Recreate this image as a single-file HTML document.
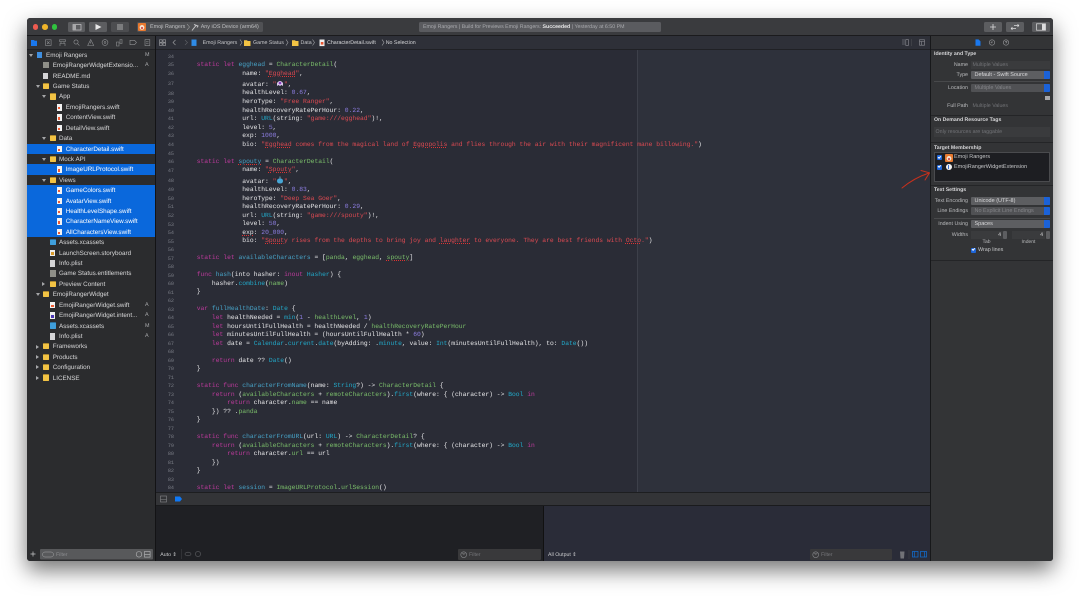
<!DOCTYPE html>
<html><head><meta charset="utf-8"><title>Xcode</title>
<style>
html,body{margin:0;padding:0;width:1080px;height:596px;overflow:hidden;background:#fff}
body{font-family:"Liberation Sans",sans-serif;text-rendering:geometricPrecision;filter:blur(.28px)}
div,span,i,b,u,svg{position:absolute}
#win{left:27px;top:18px;width:1026px;height:543px;background:#2a2c36;box-shadow:0 9px 22px rgba(0,0,0,.55);border-radius:3px;overflow:hidden}
#root{left:-27px;top:-18px;width:1080px;height:596px}
.tl{width:5.6px;height:5.6px;border-radius:50%;top:24.2px}
.btn{background:#5c5d60;border-radius:1.5px;top:22px;height:10px}
.tt{font-size:5.4px;line-height:9.5px;height:8px;white-space:nowrap;color:#b8b9bb}
/* sidebar */
.r{left:27px;width:128px;height:10.4px;font-size:6.3px;line-height:11.8px;color:#d6d6d7;white-space:nowrap}
.r span{position:absolute}
.sel{background:#0a68dc;color:#fff}
.r .a{width:0;height:0;top:3.9px;border-top:3.6px solid #a5a6a8;border-left:2.2px solid transparent;border-right:2.2px solid transparent}
.r .c{width:0;height:0;top:3.4px;border-left:3.6px solid #a5a6a8;border-top:2.2px solid transparent;border-bottom:2.2px solid transparent}
.L0 .a{left:2px}.L0 i{left:9px}.L0 span{left:19px}
.L1 .a,.L1 .c{left:8.8px}.L1 i{left:15.8px}.L1 span{left:25.7px}
.L2 .a,.L2 .c{left:15px}.L2 i{left:22.5px}.L2 span{left:32px}
.L3 i{left:29px}.L3 span{left:38.7px}
.r i{top:2.1px}
.fo{width:6.4px;height:5.2px;background:#f2c344;border-radius:.6px;margin-top:.9px;box-shadow:0 -.8px 0 #d9a82f}
.fb{width:6.4px;height:5.2px;background:#3f9fdc;border-radius:.6px;margin-top:.9px;box-shadow:0 -.8px 0 #2f86c0}
.sw{width:5px;height:6.6px;background:#f2f2f2;margin-left:.6px}
.sw:after{content:"";position:absolute;left:1.4px;top:3px;width:2.2px;height:2.2px;background:#ef5a32}
.pl{width:5px;height:6.6px;background:#d4d4d6;margin-left:.6px}
.en{width:6.4px;height:6.2px;background:#8f8f88}
.ap{width:5.4px;height:6.6px;background:#3f8fe0;margin-left:.5px}
.ia{width:5px;height:6.6px;background:#eee;margin-left:.6px}
.ia:after{content:"";position:absolute;left:1px;top:2.4px;width:3px;height:3px;background:#4a35b5}
.sb{width:5px;height:6.6px;background:#eee;margin-left:.6px}
.sb:after{content:"";position:absolute;left:1.2px;top:2px;width:2.6px;height:3.4px;background:#d89a2a}
.r u{position:absolute;left:118px;text-decoration:none;font-size:5.4px;color:#a9aaac}
/* code */
#code{left:196.7px;top:.5px;font-family:"Liberation Mono",monospace;font-size:6.33px;color:#e6e6e8;width:0;height:0}
.l{left:0;height:8px;line-height:8px;white-space:pre}
.n{left:-42.7px;width:20px;text-align:right;font-size:5.1px;color:#7a7d86;top:.3px}
.k{position:static;color:#bd3a9c}.d{position:static;color:#47a2c6}.g{position:static;color:#7abd6a}.s{position:static;color:#dc4a52}.m{position:static;color:#8c7de0}.y{position:static;color:#22a8c8}.e{position:static;text-decoration:underline dotted #d33;text-decoration-thickness:.5px;text-underline-offset:.7px}
.em{position:relative;display:inline-block;width:7.6px;height:6px}
/* inspector */
.h{left:934px;font-size:5.2px;font-weight:bold;color:#d6d6d8;white-space:nowrap;height:8px;line-height:9.4px}
.lb{width:68px;left:900px;text-align:right;font-size:5.3px;color:#b9babc;height:8px;line-height:9.6px;white-space:nowrap}
.f{background:#3d3e40;left:971px;width:79px;height:8px;font-size:5.3px;line-height:9.4px;color:#717276;text-indent:1.5px;white-space:nowrap}
.p{background:#5d5e61;left:971px;width:79px;height:8px;border-radius:1px;font-size:5.5px;line-height:9.2px;color:#d8d8da;text-indent:3.5px;white-space:nowrap;overflow:hidden}
.p:after{content:"";position:absolute;right:0;top:0;width:6px;height:8px;background:#1b62d8}
.dim{color:#85868a;background:#505154}
.sp{left:934px;width:116px;height:.6px;background:#48494b}
.spb{left:931px;width:122px;height:.7px;background:#242527}
.ck{width:5px;height:5px;background:#1f66d9;border-radius:1px}
.ck:after{content:"";position:absolute;left:1.3px;top:.7px;width:2.2px;height:1.3px;border-left:.6px solid #fff;border-bottom:.6px solid #fff;transform:rotate(-45deg)}
</style></head><body>
<div id="win"><div id="root">

<!-- toolbar -->
<div style="left:27px;top:18px;width:1026px;height:17.5px;background:#3a3b3e"></div>
<div style="left:27px;top:35px;width:1026px;height:.8px;background:#1b1b1d"></div>
<div class="tl" style="left:32.5px;background:#ee5b50"></div>
<div class="tl" style="left:42.2px;background:#f0b429"></div>
<div class="tl" style="left:51.9px;background:#30c33f"></div>
<div class="btn" style="left:68px;width:17px"></div>
<svg style="left:68px;top:22px" width="17" height="10"><rect x="5" y="2.5" width="8" height="5.5" fill="none" stroke="#c8c8ca" stroke-width=".7"/><rect x="5" y="2.5" width="3" height="5.5" fill="#a8a8aa"/></svg>
<div class="btn" style="left:89px;width:18px"></div>
<svg style="left:89px;top:22px" width="18" height="10"><path d="M6.5 2 L12.5 5 L6.5 8Z" fill="#e8e8e9"/></svg>
<div class="btn" style="left:111px;width:18px;background:#4c4d50"></div>
<div style="left:117px;top:24px;width:6px;height:6px;background:#7b7c7e"></div>
<div class="btn" style="left:137px;width:126px;background:#505154"></div>
<svg style="left:138px;top:23px" width="8" height="8"><rect width="8" height="8" rx="1" fill="#e8792f"/><circle cx="4" cy="4.4" r="2.4" fill="#f3e3d2"/><circle cx="4" cy="5" r="1" fill="#c33"/></svg>
<div class="tt" style="left:150px;top:23px;color:#bfc0c2">Emoji Rangers</div>
<svg style="left:186px;top:23px" width="5" height="8"><path d="M1 1 L3.5 4 L1 7" fill="none" stroke="#bbb" stroke-width=".5"/></svg>
<svg style="left:191px;top:23px" width="8" height="8"><path d="M1 7.5 L5 2.5 M3 1.5 L7 3 L6 4.5" fill="none" stroke="#c4c4c6" stroke-width="1"/></svg>
<div class="tt" style="left:200.7px;top:23px;color:#bfc0c2">Any iOS Device (arm64)</div>
<div class="btn" style="left:419px;width:242px;background:#5a5b5f"></div>
<div class="tt" style="left:423px;top:23px;color:#a9aaae;font-size:5.25px">Emoji Rangers | Build for Previews Emoji Rangers: <b style="position:static;color:#e6e6e7">Succeeded</b> | Yesterday at 6:50 PM</div>
<div class="btn" style="left:984px;width:18px"></div>
<svg style="left:984px;top:22px" width="18" height="10"><path d="M9 2 V8 M6 5 H12" stroke="#dcdcdd" stroke-width=".8"/></svg>
<div class="btn" style="left:1006px;width:18px"></div>
<svg style="left:1006px;top:22px" width="18" height="10"><path d="M5 6.5 H10 M5 6.5 L6.5 5.2 M13 3.5 H8 M13 3.5 L11.5 2.3 M5 6.5 L6.5 7.8 M13 3.5 L11.5 4.8" stroke="#dcdcdd" stroke-width=".7" fill="none"/></svg>
<div class="btn" style="left:1032px;width:18px"></div>
<svg style="left:1032px;top:22px" width="18" height="10"><rect x="4.5" y="1.8" width="9" height="6.4" fill="none" stroke="#dcdcdd" stroke-width=".7"/><rect x="10" y="1.8" width="3.5" height="6.4" fill="#dcdcdd"/></svg>

<!-- nav bars -->
<div style="left:27px;top:35.8px;width:128px;height:13.7px;background:#333437"></div>
<div style="left:155px;top:35.8px;width:776px;height:13.7px;background:#2e3038"></div>
<div style="left:931px;top:35.8px;width:122px;height:13.7px;background:#333436"></div>
<div style="left:27px;top:49.3px;width:1026px;height:.6px;background:#202125"></div>
<svg style="left:27px;top:36px" width="128" height="13" fill="none" stroke="#909194" stroke-width=".6">
<path d="M4 4 H7 L7.7 4.7 H10 V10 H4Z" fill="#1a78ee" stroke="none"/>
<rect x="18.5" y="3.8" width="5.6" height="5.6"/><path d="M20 5.3 L22.6 8 M22.6 5.3 L20 8"/>
<path d="M32.5 3.8 H38.5 V5.5 H32.5Z M34 5.5 V7.5 H37 V5.5 M33 10 V7.5 H38 V10"/>
<circle cx="49" cy="6" r="2.1"/><path d="M50.5 7.6 L52.4 9.5"/>
<path d="M63.7 3.5 L66.7 9.5 H60.7Z M63.7 5.5 V7.5"/>
<circle cx="78" cy="6.5" r="2.9"/><circle cx="78" cy="6.5" r=".9"/>
<path d="M89.5 6 H92 V10 H89.5Z M93 3.5 H95 V7.5 H93Z"/>
<path d="M103 4.3 H107.5 L109.5 6.5 L107.5 8.7 H103Z"/>
<rect x="118" y="3.6" width="4.8" height="6"/><path d="M119 5.5 H121.5 M119 7.2 H121.5"/>
</svg>
<svg style="left:155px;top:36px" width="270" height="13" fill="none" stroke="#a5a6a9" stroke-width=".6">
<rect x="4.5" y="3.8" width="2.6" height="2.4"/><rect x="8" y="3.8" width="2.6" height="2.4"/><rect x="4.5" y="7" width="2.6" height="2.4"/><rect x="8" y="7" width="2.6" height="2.4"/>
<path d="M20.5 4 L18 6.5 L20.5 9"/><path d="M30 4 L32.5 6.5 L30 9" stroke="#5f6066"/>
<rect x="36.5" y="3.5" width="5" height="6.4" fill="#2f8be6" stroke="none"/>
<path d="M85 3.5 L87 6.5 L85 9.5 M131 3.5 L133 6.5 L131 9.5 M157.5 3.5 L159.5 6.5 L157.5 9.5"/>
<path d="M89 4.3 H92 L92.7 5 H95.5 V10 H89Z" fill="#f2c344" stroke="none"/>
<path d="M137 4.3 H140 L140.7 5 H143.5 V10 H137Z" fill="#f2c344" stroke="none"/>
<rect x="164.5" y="3.5" width="5" height="6.6" fill="#eee" stroke="none"/><rect x="165.8" y="6" width="2.6" height="2.6" fill="#e9552f" stroke="none"/>
<path d="M227 3.5 L229 6.5 L227 9.5"/>
</svg>
<div class="tt" style="left:202.6px;top:39.4px;color:#c3c4c7;font-size:5.3px">Emoji Rangers</div>
<div class="tt" style="left:253px;top:39.4px;color:#c3c4c7;font-size:5.3px">Game Status</div>
<div class="tt" style="left:300.5px;top:39.4px;color:#c3c4c7;font-size:5.3px">Data</div>
<div class="tt" style="left:327px;top:39.4px;color:#d5d6d8;font-size:5.3px">CharacterDetail.swift</div>
<div class="tt" style="left:385.7px;top:39.4px;color:#d5d6d8;font-size:5.3px">No Selection</div>
<svg style="left:900px;top:36px" width="30" height="13" fill="none" stroke="#8f9096" stroke-width=".6"><path d="M2 4 H5 M2 6 H5 M2 8 H5"/><rect x="5.8" y="3.6" width="2.6" height="5.8"/><path d="M11.5 3 V10" stroke="#4a4b50"/><rect x="19.5" y="3.8" width="5" height="5.4"/><path d="M19.5 5.5 H24.5 M21.3 5.5 V9"/></svg>
<svg style="left:972px;top:36px" width="40" height="13" fill="none" stroke="#9b9c9f" stroke-width=".6"><path d="M3.5 3.4 H6.5 L8.5 5.4 V9.8 H3.5Z" fill="#1a78ee" stroke="none"/><circle cx="20" cy="6.5" r="2.7"/><path d="M20 5 V6.8 H18.6"/><circle cx="34" cy="6.5" r="2.7"/><path d="M33 5.7 Q34 4.6 35 5.7 Q35 6.4 34 6.8 V7.4"/></svg>

<!-- sidebar -->
<div style="left:27px;top:50px;width:128px;height:511px;background:#2b2c2e"></div>
<div style="left:155px;top:36px;width:.9px;height:525px;background:#131315"></div>
<div class="r L0" style="top:49.8px"><b class="a"></b><i class="ap"></i><span>Emoji Rangers</span><u>M</u></div>
<div class="r L1" style="top:60.2px"><i class="en"></i><span>EmojiRangerWidgetExtensio...</span><u>A</u></div>
<div class="r L1" style="top:70.6px"><i class="pl"></i><span>README.md</span></div>
<div class="r L1" style="top:81px"><b class="a"></b><i class="fo"></i><span>Game Status</span></div>
<div class="r L2" style="top:91.4px"><b class="a"></b><i class="fo"></i><span>App</span></div>
<div class="r L3" style="top:101.9px"><i class="sw"></i><span>EmojiRangers.swift</span></div>
<div class="r L3" style="top:112.3px"><i class="sw"></i><span>ContentView.swift</span></div>
<div class="r L3" style="top:122.7px"><i class="sw"></i><span>DetailView.swift</span></div>
<div class="r L2" style="top:133.1px"><b class="a"></b><i class="fo"></i><span>Data</span></div>
<div class="r L3 sel" style="top:143.5px"><i class="sw"></i><span>CharacterDetail.swift</span></div>
<div class="r L2" style="top:153.9px"><b class="a"></b><i class="fo"></i><span>Mock API</span></div>
<div class="r L3 sel" style="top:164.3px"><i class="sw"></i><span>ImageURLProtocol.swift</span></div>
<div class="r L2" style="top:174.7px"><b class="a"></b><i class="fo"></i><span>Views</span></div>
<div class="r L3 sel" style="top:185.1px;height:10.6px"><i class="sw"></i><span>GameColors.swift</span></div>
<div class="r L3 sel" style="top:195.5px;height:10.6px"><i class="sw"></i><span>AvatarView.swift</span></div>
<div class="r L3 sel" style="top:206px;height:10.6px"><i class="sw"></i><span>HealthLevelShape.swift</span></div>
<div class="r L3 sel" style="top:216.4px;height:10.6px"><i class="sw"></i><span>CharacterNameView.swift</span></div>
<div class="r L3 sel" style="top:226.8px"><i class="sw"></i><span>AllCharactersView.swift</span></div>
<div class="r L2" style="top:237.2px"><i class="fb"></i><span>Assets.xcassets</span></div>
<div class="r L2" style="top:247.6px"><i class="sb"></i><span>LaunchScreen.storyboard</span></div>
<div class="r L2" style="top:258px"><i class="pl"></i><span>Info.plist</span></div>
<div class="r L2" style="top:268.4px"><i class="en"></i><span>Game Status.entitlements</span></div>
<div class="r L2" style="top:278.8px"><b class="c"></b><i class="fo"></i><span>Preview Content</span></div>
<div class="r L1" style="top:289.2px"><b class="a"></b><i class="fo"></i><span>EmojiRangerWidget</span></div>
<div class="r L2" style="top:299.6px"><i class="sw"></i><span>EmojiRangerWidget.swift</span><u>A</u></div>
<div class="r L2" style="top:310.1px"><i class="ia"></i><span>EmojiRangerWidget.intent...</span><u>A</u></div>
<div class="r L2" style="top:320.5px"><i class="fb"></i><span>Assets.xcassets</span><u>M</u></div>
<div class="r L2" style="top:330.9px"><i class="pl"></i><span>Info.plist</span><u>A</u></div>
<div class="r L1" style="top:341.3px"><b class="c"></b><i class="fo"></i><span>Frameworks</span></div>
<div class="r L1" style="top:351.7px"><b class="c"></b><i class="fo"></i><span>Products</span></div>
<div class="r L1" style="top:362.1px"><b class="c"></b><i class="fo"></i><span>Configuration</span></div>
<div class="r L1" style="top:372.5px"><b class="c"></b><i class="fo"></i><span>LICENSE</span></div>
<svg style="left:27px;top:548px" width="128" height="13"><path d="M6 3.5 V8.5 M3.5 6 H8.5" stroke="#c9c9cb" stroke-width=".7"/><rect x="13" y="1" width="113" height="10.5" rx="1" fill="#58595b"/><rect x="15.5" y="4" width="11" height="5" rx="2.5" fill="none" stroke="#a5a6a8" stroke-width=".5"/><circle cx="112" cy="6.3" r="2.8" fill="none" stroke="#b9babc" stroke-width=".6"/><rect x="117.5" y="3.5" width="5.6" height="5.6" fill="none" stroke="#b9babc" stroke-width=".6"/><path d="M117.5 6.3 H123" stroke="#b9babc" stroke-width=".6"/></svg>
<div class="tt" style="left:56px;top:551px;color:#8b8c8f;font-size:5.2px">Filter</div>

<!-- editor -->
<div style="left:156px;top:50px;width:775px;height:442px;background:#2a2c36"></div>
<div style="left:637px;top:50px;width:294px;height:442px;background:#2e313b"></div>
<div style="left:637px;top:50px;width:.5px;height:442px;background:#3d404a"></div>
<div id="code">
<div class="l" style="top:52px"><span class="n">34</span></div>
<div class="l" style="top:60.5px"><span class="n">35</span><span class="k">static let</span> <span class="d">egghead</span> = <span class="g">CharacterDetail</span>(</div>
<div class="l" style="top:69.2px"><span class="n">36</span>            name: <span class="s">"<span class="e">Egghead</span>"</span>,</div>
<div class="l" style="top:79px"><span class="n">37</span>            avatar: <span class="s">"<span class="em"><svg width="8" height="7" style="left:0;top:0"><path d="M1 6 V3 Q4 -1 7 3 V6 L5.5 5 L4 6 L2.5 5Z" fill="#d9c8ea"/><circle cx="4" cy="3" r="1.3" fill="#8a3fc0"/></svg></span>"</span>,</div>
<div class="l" style="top:88.8px"><span class="n">38</span>            healthLevel: <span class="m">0.67</span>,</div>
<div class="l" style="top:97.5px"><span class="n">39</span>            heroType: <span class="s">"Free Ranger"</span>,</div>
<div class="l" style="top:106px"><span class="n">40</span>            healthRecoveryRatePerHour: <span class="m">0.22</span>,</div>
<div class="l" style="top:114.6px"><span class="n">41</span>            url: <span class="y">URL</span>(string: <span class="s">"game:///egghead"</span>)!,</div>
<div class="l" style="top:123.2px"><span class="n">42</span>            level: <span class="m">5</span>,</div>
<div class="l" style="top:131.7px"><span class="n">43</span>            exp: <span class="m">1000</span>,</div>
<div class="l" style="top:140.2px"><span class="n">44</span>            bio: <span class="s">"<span class="e">Egghead</span> comes from the magical land of <span class="e">Eggopolis</span> and flies through the air with their magnificent mane billowing."</span>)</div>
<div class="l" style="top:148.8px"><span class="n">45</span></div>
<div class="l" style="top:157.3px"><span class="n">46</span><span class="k">static let</span> <span class="d e">spouty</span> = <span class="g">CharacterDetail</span>(</div>
<div class="l" style="top:165.8px"><span class="n">47</span>            name: <span class="s">"<span class="e">Spouty</span>"</span>,</div>
<div class="l" style="top:176px"><span class="n">48</span>            avatar: <span class="s">"<span class="em"><svg width="8" height="8" style="left:0;top:-.5px"><path d="M1 5 Q1 2.5 4 2.5 Q7 2.5 7 5 Q7 7.5 4 7.5 Q1 7.5 1 5Z" fill="#46a6d6"/><path d="M4 2.5 V.5" stroke="#8fd2ef" stroke-width=".7"/></svg></span>"</span>,</div>
<div class="l" style="top:185.7px"><span class="n">49</span>            healthLevel: <span class="m">0.83</span>,</div>
<div class="l" style="top:194.2px"><span class="n">50</span>            heroType: <span class="s">"Deep Sea Goer"</span>,</div>
<div class="l" style="top:202.7px"><span class="n">51</span>            healthRecoveryRatePerHour: <span class="m">0.29</span>,</div>
<div class="l" style="top:211.2px"><span class="n">52</span>            url: <span class="y">URL</span>(string: <span class="s">"game:///spouty"</span>)!,</div>
<div class="l" style="top:219.8px"><span class="n">53</span>            level: <span class="m">50</span>,</div>
<div class="l" style="top:228.3px"><span class="n">54</span>            <span class="e">exp</span>: <span class="m">20_000</span>,</div>
<div class="l" style="top:236.8px"><span class="n">55</span>            bio: <span class="s">"<span class="e">Spouty</span> rises from the depths to bring joy and <span class="e">laughter</span> to everyone. They are best friends with <span class="e">Octo</span>."</span>)</div>
<div class="l" style="top:245.3px"><span class="n">56</span></div>
<div class="l" style="top:253.8px"><span class="n">57</span><span class="k">static let</span> <span class="d">availableCharacters</span> = [<span class="g">panda</span>, <span class="g">egghead</span>, <span class="g e">spouty</span>]</div>
<div class="l" style="top:262.3px"><span class="n">58</span></div>
<div class="l" style="top:270.8px"><span class="n">59</span><span class="k">func</span> <span class="d">hash</span>(into hasher: <span class="k">inout</span> <span class="y">Hasher</span>) {</div>
<div class="l" style="top:279.4px"><span class="n">60</span>    hasher.<span class="y">combine</span>(<span class="g">name</span>)</div>
<div class="l" style="top:287.9px"><span class="n">61</span>}</div>
<div class="l" style="top:296.4px"><span class="n">62</span></div>
<div class="l" style="top:304.9px"><span class="n">63</span><span class="k">var</span> <span class="d">fullHealthDate</span>: <span class="y">Date</span> {</div>
<div class="l" style="top:313.4px"><span class="n">64</span>    <span class="k">let</span> healthNeeded = <span class="y">min</span>(<span class="m">1</span> - <span class="g">healthLevel</span>, <span class="m">1</span>)</div>
<div class="l" style="top:322px"><span class="n">65</span>    <span class="k">let</span> hoursUntilFullHealth = healthNeeded / <span class="g">healthRecoveryRatePerHour</span></div>
<div class="l" style="top:330.5px"><span class="n">66</span>    <span class="k">let</span> minutesUntilFullHealth = (hoursUntilFullHealth * <span class="m">60</span>)</div>
<div class="l" style="top:339px"><span class="n">67</span>    <span class="k">let</span> date = <span class="y">Calendar</span>.<span class="y">current</span>.<span class="y">date</span>(byAdding: .<span class="y">minute</span>, value: <span class="y">Int</span>(minutesUntilFullHealth), to: <span class="y">Date</span>())</div>
<div class="l" style="top:347.5px"><span class="n">68</span></div>
<div class="l" style="top:356px"><span class="n">69</span>    <span class="k">return</span> date ?? <span class="y">Date</span>()</div>
<div class="l" style="top:364.6px"><span class="n">70</span>}</div>
<div class="l" style="top:373.1px"><span class="n">71</span></div>
<div class="l" style="top:381.6px"><span class="n">72</span><span class="k">static func</span> <span class="d">characterFromName</span>(name: <span class="y">String</span>?) -&gt; <span class="g">CharacterDetail</span> {</div>
<div class="l" style="top:390.1px"><span class="n">73</span>    <span class="k">return</span> (<span class="g">availableCharacters</span> + <span class="g">remoteCharacters</span>).<span class="y">first</span>(where: { (character) -&gt; <span class="y">Bool</span> <span class="k">in</span></div>
<div class="l" style="top:398.6px"><span class="n">74</span>        <span class="k">return</span> character.<span class="g">name</span> == name</div>
<div class="l" style="top:407.1px"><span class="n">75</span>    }) ?? .<span class="g">panda</span></div>
<div class="l" style="top:415.6px"><span class="n">76</span>}</div>
<div class="l" style="top:424.1px"><span class="n">77</span></div>
<div class="l" style="top:432.6px"><span class="n">78</span><span class="k">static func</span> <span class="d">characterFromURL</span>(url: <span class="y">URL</span>) -&gt; <span class="g">CharacterDetail</span>? {</div>
<div class="l" style="top:441.1px"><span class="n">79</span>    <span class="k">return</span> (<span class="g">availableCharacters</span> + <span class="g">remoteCharacters</span>).<span class="y">first</span>(where: { (character) -&gt; <span class="y">Bool</span> <span class="k">in</span></div>
<div class="l" style="top:449.7px"><span class="n">80</span>        <span class="k">return</span> character.<span class="g">url</span> == url</div>
<div class="l" style="top:458.2px"><span class="n">81</span>    })</div>
<div class="l" style="top:466.7px"><span class="n">82</span>}</div>
<div class="l" style="top:475.2px"><span class="n">83</span></div>
<div class="l" style="top:483.7px"><span class="n">84</span><span class="k">static let</span> <span class="d">session</span> = <span class="g">ImageURLProtocol</span>.<span class="g">urlSession</span>()</div>
</div>

<!-- debug -->
<div style="left:156px;top:491.7px;width:775px;height:14px;background:#333437;border-top:.7px solid #1d1e20;border-bottom:.7px solid #1a1b1d;box-sizing:border-box"></div>
<svg style="left:156px;top:492px" width="30" height="14"><rect x="4.5" y="4" width="6" height="6" fill="none" stroke="#88898c" stroke-width=".6"/><path d="M4.5 7.5 H10.5" stroke="#88898c" stroke-width=".6"/><path d="M19 4.5 H24 L26 7 L24 9.5 H19Z" fill="#0f78f5"/></svg>
<div style="left:156px;top:506px;width:387px;height:55px;background:#1f2024"></div>
<div style="left:543px;top:506px;width:388px;height:55px;background:#2a2c38;border-left:.7px solid #111;box-sizing:border-box"></div>
<div class="tt" style="left:160.3px;top:551px;color:#c9cacc;font-size:5.2px">Auto ⇕</div>
<svg style="left:180px;top:548px" width="24" height="12" fill="none" stroke="#5f6064" stroke-width=".6"><path d="M1.5 1 V11" stroke="#3f4044"/><ellipse cx="8" cy="6" rx="3" ry="1.8"/><circle cx="18" cy="6" r="2.6"/></svg>
<div style="left:458px;top:549px;width:83px;height:11px;background:#39393b;border-radius:1px"></div>
<svg style="left:460px;top:550.5px" width="8" height="8"><circle cx="3.7" cy="3.7" r="2.9" fill="none" stroke="#87888b" stroke-width=".6"/><path d="M2 2.6 H5.4 M2.8 3.8 H4.6" stroke="#87888b" stroke-width=".5"/></svg>
<div class="tt" style="left:469px;top:551px;color:#75767a;font-size:5.2px">Filter</div>
<div class="tt" style="left:548px;top:551px;color:#c9cacc;font-size:5.2px">All Output ⇕</div>
<div style="left:810px;top:549px;width:81.5px;height:11px;background:#39393b;border-radius:1px"></div>
<svg style="left:812px;top:550.5px" width="8" height="8"><circle cx="3.7" cy="3.7" r="2.9" fill="none" stroke="#87888b" stroke-width=".6"/><path d="M2 2.6 H5.4 M2.8 3.8 H4.6" stroke="#87888b" stroke-width=".5"/></svg>
<div class="tt" style="left:821px;top:551px;color:#75767a;font-size:5.2px">Filter</div>
<svg style="left:898px;top:549px" width="32" height="11" fill="none"><path d="M2 2.5 H6.5 L6 9.5 H2.5Z" fill="#717277"/><path d="M11 1 V10" stroke="#3f4046" stroke-width=".6"/><rect x="14.5" y="2.5" width="5.5" height="5.5" stroke="#1070d8" stroke-width=".7"/><path d="M16.3 2.5 V8" stroke="#1070d8" stroke-width=".7"/><rect x="22.5" y="2.5" width="6" height="5.5" stroke="#1070d8" stroke-width=".7"/><path d="M26.5 2.5 V8" stroke="#1070d8" stroke-width=".7"/></svg>

<!-- inspector -->
<div style="left:931px;top:50px;width:122px;height:511px;background:#333436"></div>
<div style="left:930.4px;top:36px;width:.8px;height:525px;background:#17181a"></div>
<div class="h" style="top:49.7px">Identity and Type</div>
<div class="lb" style="top:61px">Name</div>
<div class="f" style="top:60.5px;background:#3a3b3d;height:8.5px">Multiple Values</div>
<div class="lb" style="top:71.3px">Type</div>
<div class="p" style="top:71.3px">Default - Swift Source</div>
<div class="sp" style="top:81.3px"></div>
<div class="lb" style="top:84px">Location</div>
<div class="p dim" style="top:84px">Multiple Values</div>
<div style="left:1044.5px;top:95.5px;width:5.5px;height:4px;background:#a7a8aa"></div>
<div class="lb" style="top:102px">Full Path</div>
<div class="f" style="top:102px;background:none">Multiple Values</div>
<div class="spb" style="top:115.4px"></div>
<div class="h" style="top:116px">On Demand Resource Tags</div>
<div class="f" style="left:934px;width:116px;top:126.5px;height:10px;line-height:10.8px;background:#3a3b3d">Only resources are taggable</div>
<div class="spb" style="top:142.3px"></div>
<div class="h" style="top:143.5px">Target Membership</div>
<div style="left:934px;top:152px;width:116px;height:29.5px;background:#1d1e22;border:.6px solid #4a4b4e;box-sizing:border-box"></div>
<div class="ck" style="left:937px;top:155px"></div>
<svg style="left:945px;top:153.5px" width="8" height="8"><rect width="8" height="8" rx="1" fill="#e8792f"/><circle cx="4" cy="4.4" r="2.4" fill="#f3e3d2"/><circle cx="4" cy="5" r="1" fill="#c33"/></svg>
<div class="tt" style="left:954px;top:153.3px;color:#c6c7c9;font-size:5.5px">Emoji Rangers</div>
<div class="ck" style="left:937px;top:164.5px"></div>
<div style="left:945.5px;top:163.8px;width:6.5px;height:6.5px;background:#f3f3f3;border-radius:50%"></div>
<div style="left:948.2px;top:165px;width:1.2px;height:4px;background:#3a6fd0"></div>
<div class="tt" style="left:954px;top:163px;color:#c6c7c9;font-size:5.5px">EmojiRangerWidgetExtension</div>
<div class="spb" style="top:185px"></div>
<div class="h" style="top:186px">Text Settings</div>
<div class="lb" style="top:196.5px">Text Encoding</div>
<div class="p" style="top:196.5px">Unicode (UTF-8)</div>
<div class="lb" style="top:207px">Line Endings</div>
<div class="p dim" style="top:207px">No Explicit Line Endings</div>
<div class="sp" style="top:217.5px"></div>
<div class="lb" style="top:220px">Indent Using</div>
<div class="p" style="top:220px">Spaces</div>
<div class="lb" style="top:231px">Widths</div>
<div class="f" style="top:231px;width:31.5px;background:#3a3b3d;color:#d0d0d2;text-align:right;text-indent:0;padding-right:0">4&nbsp;</div>
<div style="left:1003px;top:231px;width:4px;height:8px;background:#5d5e61;border-radius:1px"></div>
<div class="f" style="left:1012px;top:231px;width:32.5px;background:#3a3b3d;color:#d0d0d2;text-align:right;text-indent:0">4&nbsp;</div>
<div style="left:1045.5px;top:231px;width:4px;height:8px;background:#5d5e61;border-radius:1px"></div>
<div class="tt" style="left:971px;width:31px;text-align:center;top:237.5px;font-size:5px">Tab</div>
<div class="tt" style="left:1012px;width:33px;text-align:center;top:237.5px;font-size:5px">Indent</div>
<div class="ck" style="left:971px;top:247.5px"></div>
<div class="tt" style="left:978px;top:246px;color:#c6c7c9;font-size:5.4px">Wrap lines</div>
<div class="spb" style="top:260px"></div>

<svg style="left:895px;top:165px" width="42" height="28" fill="none" stroke="#c9301c" stroke-width="1" stroke-linecap="round" stroke-linejoin="round"><path d="M7 23 Q19 13 34 8"/><path d="M26 5.5 L34.5 7.8 L30 15"/></svg>
</div></div>
</body></html>
